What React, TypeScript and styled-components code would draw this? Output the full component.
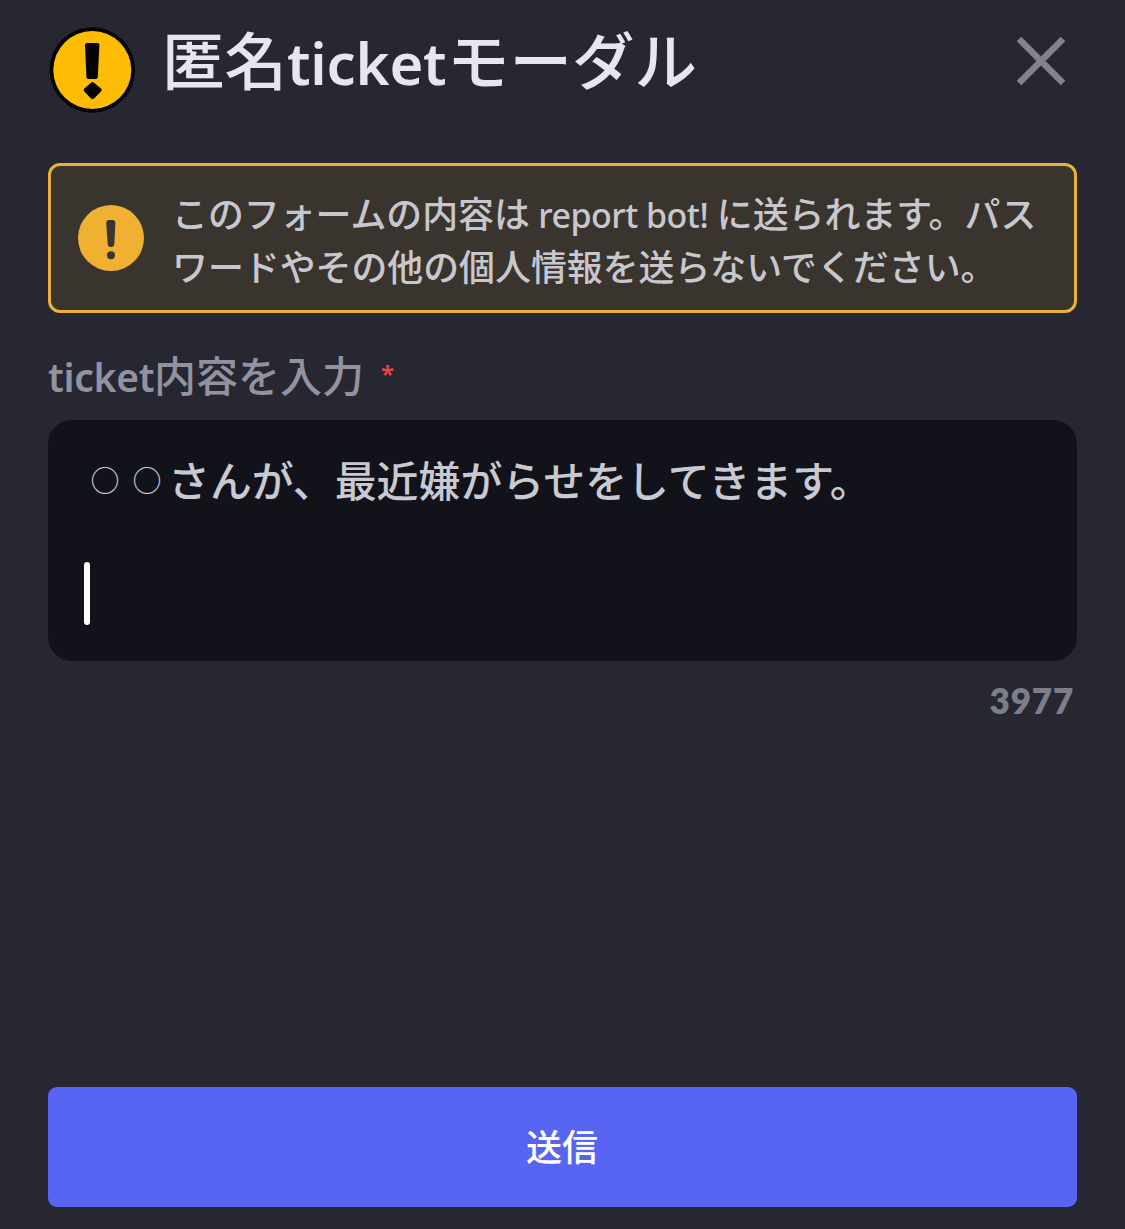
import React from 'react';
import styled, { createGlobalStyle } from 'styled-components';

const GlobalStyle = createGlobalStyle`
  * { box-sizing: border-box; }
  body { margin: 0; background: #272731; }
`;

const jp = `"Noto Sans CJK JP", sans-serif`;

const Modal = styled.main`
  display: flex;
  flex-direction: column;
  height: 1229px;
  padding: 0 48px 22px;
  background: #272731;
  font-family: ${jp};
  font-weight: 500;
`;

const Header = styled.header`
  display: flex;
  align-items: flex-start;
  height: 163px;
  padding-top: 26px;
`;

const AppIcon = styled.svg`
  flex: none;
  width: 88px;
  height: 88px;
`;

const Title = styled.h1`
  margin: -14px 0 0 26px;
  flex: 1;
  font-size: 62.5px;
  line-height: 92px;
  font-weight: 500;
  color: #e6e6ec;
  white-space: nowrap;
`;

const Latin = styled.span<{ $size: number; $spacing?: number; $width: number }>`
  display: inline-block;
  font-family: "Noto Sans", sans-serif;
  font-size: ${p => p.$size}px;
  letter-spacing: ${p => p.$spacing ?? 0}px;
  width: ${p => p.$width}px;
  font-weight: 600;
  line-height: 1;
  white-space: nowrap;
`;

const NoticeLatin = styled(Latin)`
  font-weight: 500;
`;

const CloseButton = styled.button`
  width: 52px;
  height: 52px;
  margin: 9px 10px 0 0;
  padding: 0;
  border: 0;
  background: none;
  svg { display: block; }
`;

const Notice = styled.section`
  display: flex;
  align-items: center;
  height: 150px;
  padding: 0 0 0 27px;
  border: 3px solid #ebb03c;
  border-radius: 12px;
  background: #3a342f;
`;

const NoticeIcon = styled.svg`
  flex: none;
  width: 66px;
  height: 66px;
`;

const NoticeText = styled.p`
  margin: 1px 0 0 28px;
  font-size: 35.9px;
  line-height: 53px;
  color: #c8c7cd;
  white-space: nowrap;
`;

const Label = styled.label`
  display: flex;
  margin-top: 31px;
  height: 60px;
  font-size: 42px;
  line-height: 60px;
  color: #9292a0;
`;

const Required = styled.span`
  margin-left: 17px;
  font-family: "Noto Sans", sans-serif;
  font-size: 24px;
  font-weight: 600;
  color: #ee4245;
`;

const Field = styled.div`
  margin-top: 16px;
  height: 241px;
  padding: 31px 36px;
  border-radius: 24px;
  background: #12121a;
  font-size: 41.9px;
  line-height: 56px;
  color: #c9c9d1;
`;

const Line = styled.div`
  display: flex;
  align-items: center;
  height: 56px;
  white-space: nowrap;
`;

const Circle = styled.span`
  width: 42px;
  text-align: center;
  font-size: 29px;
  font-weight: 400;
`;

const Caret = styled.span`
  flex: none;
  width: 6px;
  height: 63px;
  margin-top: 5px;
  border-radius: 3px;
  background: #fff;
`;

const Counter = styled.div`
  margin-top: 18px;
  text-align: right;
  padding-right: 3px;
  font-family: Lato, sans-serif;
  font-weight: 800;
  font-size: 35px;
  line-height: 42px;
  letter-spacing: 0.8px;
  color: #7e7e8b;
`;

const Submit = styled.button`
  margin-top: auto;
  height: 120px;
  padding: 0 1px 4px 0;
  border: 0;
  border-radius: 9px;
  background: #5865f2;
  color: #fff;
  font-family: ${jp};
  font-weight: 500;
  font-size: 36px;
`;

export default function App() {
  return (
    <>
      <GlobalStyle />
      <Modal>
        <Header>
          <AppIcon viewBox="0 0 88 88">
            <circle cx="44.3" cy="44" r="42.8" fill="#050505" />
            <circle cx="44.3" cy="44" r="39" fill="#ffbc05" />
            <path d="M37 19Q37 17 39 17H49.5Q51.5 17 51.4 19L49.8 51Q49.7 53 47.7 53H40.5Q38.5 53 38.4 51Z" fill="#050505" />
            <path d="M42.7 57Q44.5 55 46.3 57L53 62.5Q54.5 64 53 65.5L46.3 72.2Q44.5 74 42.7 72.2L36.3 65.5Q35 64 36.3 62.5Z" fill="#050505" />
          </AppIcon>
          <Title>匿名<Latin $size={58} $spacing={-0.2} $width={160}>ticket</Latin>モーダル</Title>
          <CloseButton aria-label="閉じる">
            <svg width="52" height="52" viewBox="0 0 52 52" stroke="#82828f" strokeWidth="6.6">
              <path d="M4 4L48 48M48 4L4 48" />
            </svg>
          </CloseButton>
        </Header>
        <Notice>
          <NoticeIcon viewBox="0 0 66 66">
            <circle cx="33" cy="33" r="33" fill="#f0b132" />
            <path d="M28.2 18.5Q28 15 31.4 15H34.2Q37.6 15 37.4 18.5L36.3 39Q36.1 42 33.5 42H32.5Q29.9 42 29.7 39Z" fill="#3a342f" />
            <circle cx="33" cy="50.3" r="4" fill="#3a342f" />
          </NoticeIcon>
          <NoticeText>
            このフォームの内容は<NoticeLatin $size={34} $spacing={-0.5} $width={187}>&nbsp;report bot!</NoticeLatin>に送られます。パス<br />
            ワードやその他の個人情報を送らないでください。
          </NoticeText>
        </Notice>
        <Label>
          <span><Latin $size={39} $spacing={-0.3} $width={106}>ticket</Latin>内容を入力</span>
          <Required>*</Required>
        </Label>
        <Field role="textbox">
          <Line><Circle>○</Circle><Circle>○</Circle>さんが、最近嫌がらせをしてきます。</Line>
          <Line />
          <Line><Caret /></Line>
        </Field>
        <Counter>3977</Counter>
        <Submit>送信</Submit>
      </Modal>
    </>
  );
}
